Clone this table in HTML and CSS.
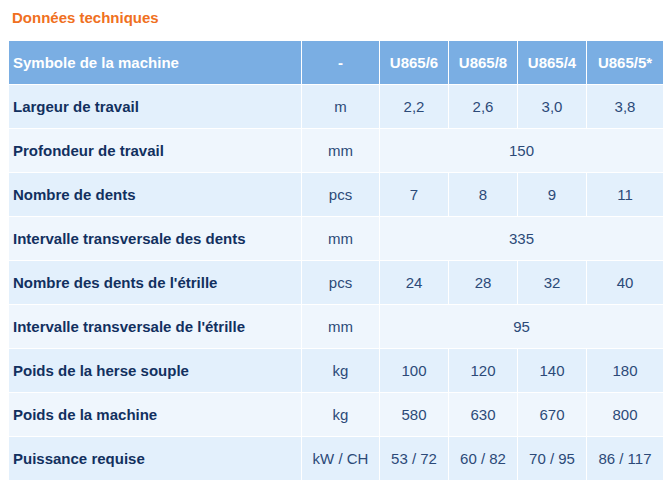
FILE: index.html
```html
<!DOCTYPE html>
<html lang="fr">
<head>
<meta charset="utf-8">
<link rel="stylesheet" href="styles.css">
</head>
<body>
<h2 class="title">Données techniques</h2>
<table class="specs">
  <colgroup>
    <col class="c-label"><col class="c-unit"><col class="c-val"><col class="c-val"><col class="c-val"><col class="c-last">
  </colgroup>
  <thead>
    <tr><th class="label">Symbole de la machine</th><th>-</th><th>U865/6</th><th>U865/8</th><th>U865/4</th><th>U865/5*</th></tr>
  </thead>
  <tbody>
    <tr><td class="label">Largeur de travail</td><td>m</td><td>2,2</td><td>2,6</td><td>3,0</td><td>3,8</td></tr>
    <tr><td class="label">Profondeur de travail</td><td>mm</td><td colspan="4">150</td></tr>
    <tr><td class="label">Nombre de dents</td><td>pcs</td><td>7</td><td>8</td><td>9</td><td>11</td></tr>
    <tr><td class="label">Intervalle transversale des dents</td><td>mm</td><td colspan="4">335</td></tr>
    <tr><td class="label">Nombre des dents de l'étrille</td><td>pcs</td><td>24</td><td>28</td><td>32</td><td>40</td></tr>
    <tr><td class="label">Intervalle transversale de l'étrille</td><td>mm</td><td colspan="4">95</td></tr>
    <tr><td class="label">Poids de la herse souple</td><td>kg</td><td>100</td><td>120</td><td>140</td><td>180</td></tr>
    <tr><td class="label">Poids de la machine</td><td>kg</td><td>580</td><td>630</td><td>670</td><td>800</td></tr>
    <tr><td class="label">Puissance requise</td><td>kW / CH</td><td>53 / 72</td><td>60 / 82</td><td>70 / 95</td><td>86 / 117</td></tr>
  </tbody>
</table>
</body>
</html>
```

FILE: styles.css
```css
html, body {
  margin: 0;
  padding: 0;
  background: #ffffff;
  font-family: "Liberation Sans", Arial, sans-serif;
}
body {
  padding: 8px 9px 0 9px;
}
.title {
  margin: 0 0 0 3px;
  height: 32px;
  font-size: 15px;
  line-height: 19px;
  font-weight: bold;
  color: #f07021;
}
.specs {
  border-collapse: collapse;
  table-layout: fixed;
  width: 655px;
  margin-left: -1px;
}
.c-label { width: 293px; }
.c-unit { width: 78px; }
.c-val { width: 69px; }
.c-last { width: 77px; }
.specs th, .specs td {
  height: 43px;
  padding: 0;
  border: 1px solid #ffffff;
  text-align: center;
  font-size: 15px;
  box-sizing: border-box;
}
.specs tr {
  height: 44px;
}
.specs th {
  background: #7aaee3;
  color: #ffffff;
  font-weight: bold;
}
.specs td {
  color: #2c4a78;
}
.specs tbody tr:nth-child(odd) td {
  background: #e3f0fc;
}
.specs tbody tr:nth-child(even) td {
  background: #eff6fd;
}
.specs .label {
  text-align: left;
  padding-left: 4px;
  font-weight: bold;
}
.specs td.label {
  color: #12305f;
}
```
